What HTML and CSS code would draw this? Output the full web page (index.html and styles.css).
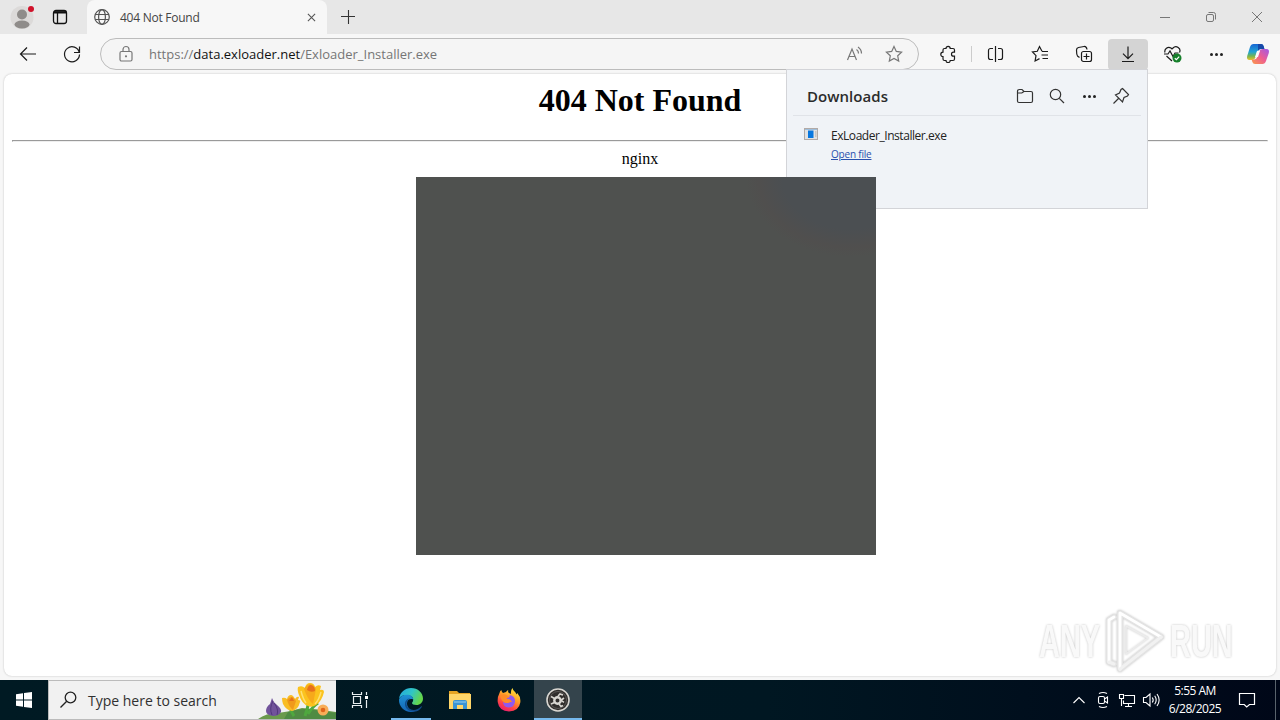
FILE: index.html
```
<!DOCTYPE html>
<html lang="en">
<head>
    <meta charset="utf-8">
    <title>404 Not Found</title>
    <link rel="stylesheet" href="styles.css">
</head>
<body>
<div class="desktop">
    <div class="browser">
        <div class="titlebar">
            <div class="profile">
                <svg width="24" height="24" viewBox="0 0 24 24">
                    <circle cx="12" cy="12.5" r="11.5" fill="#dcdad9"/>
                    <circle cx="12" cy="9.5" r="5" fill="#8f8c8a"/>
                    <ellipse cx="12" cy="19.5" rx="7.5" ry="4" fill="#8f8c8a"/>
                    <circle cx="21" cy="4" r="3" fill="#d0122a"/>
                </svg>
            </div>
            <svg class="workspaces" width="16" height="16" viewBox="0 0 16 16" fill="none" stroke="#111" stroke-width="1.3">
                <rect x="1.5" y="1.5" width="13" height="13" rx="2.5"/>
                <path d="M2 3.3h12" stroke-width="2.4"/>
                <path d="M5.5 4v10"/>
            </svg>
            <div class="tab">
                <svg width="16" height="16" viewBox="0 0 16 16" fill="none" stroke="#555" stroke-width="1.2">
                    <circle cx="8" cy="8" r="7.3"/>
                    <ellipse cx="8" cy="8" rx="3.4" ry="7.3"/>
                    <path d="M1.2 5.5h13.6M1.2 10.5h13.6"/>
                </svg>
                <span class="tab-title">404 Not Found</span>
                <svg width="9" height="9" viewBox="0 0 10 10" fill="none" stroke="#555" stroke-width="1.2"><path d="M1 1l8 8M9 1l-8 8"/></svg>
            </div>
            <svg class="new-tab" width="14" height="14" viewBox="0 0 14 14" fill="none" stroke="#333" stroke-width="1.1"><path d="M7.5 0v14M0 6.5h14"/></svg>
            <div class="window-buttons">
                <svg width="46" height="34" viewBox="0 0 46 34"><path d="M18 17.5h10"/></svg>
                <svg width="46" height="34" viewBox="0 0 46 34"><rect x="18.500" y="14.500" width="7" height="7" rx="1.5"/><path d="M20.500 12.500h5a2 2 0 0 1 2 2v5"/></svg>
                <svg width="46" height="34" viewBox="0 0 46 34"><path d="M18 12l10 10M28 12l-10 10"/></svg>
            </div>
        </div>

        <div class="toolbar">
            <div class="tool"><svg width="20" height="20" viewBox="0 0 20 20"><path d="M18 10H2.500M9 3.500L2.500 10L9 16.500"/></svg></div>
            <div class="tool reload"><svg width="20" height="20" viewBox="0 0 20 20"><path d="M17.300 8.500A7.500 7.500 0 1 0 17.500 10.500M17.500 2.500v6h-5.500"/></svg></div>
            <div class="address">
                <svg class="lock" width="16" height="18" viewBox="0 0 16 18"><rect x="2" y="6.500" width="12" height="9.500" rx="1.5"/><path d="M5 6.500V4.500a3 3 0 0 1 6 0v2"/><circle cx="8" cy="11.300" r=".5"/></svg>
                <span class="url">https://<b>data.exloader.net</b>/Exloader_Installer.exe</span>
                <svg class="read-aloud" width="18" height="18" viewBox="0 0 18 18"><path d="M2.500 15L7 4L11.500 15M4 11.500h6M11.500 4.500a4.500 4.500 0 0 1 2 4M13 2a8 8 0 0 1 3.500 6.500"/></svg>
                <svg class="star" width="18" height="18" viewBox="0 0 18 18"><path d="M9 1.500l2.300 4.900 5.300.7-3.900 3.700 1 5.300L9 13.500l-4.700 2.600 1-5.300L1.400 7.100l5.300-.7z"/></svg>
            </div>
            <div class="tool"><svg width="18" height="18" viewBox="0 0 18 18"><path d="M5.500 3.500H7a2.100 2.100 0 0 1 4.200 0H14q1.500 0 1.500 1.500v2.200h-1a2 2 0 1 0 0 4h1V14q0 1.500-1.500 1.500h-2.800a2.100 2.100 0 0 1-4.200 0H5.500q-1.500 0-1.500-1.500v-2.400a2.200 2.200 0 1 1 0-4.400V5q0-1.500 1.500-1.500z"/></svg></div>
            <div class="divider"></div>
            <div class="tool"><svg width="18" height="18" viewBox="0 0 18 18"><path d="M8.500 1v16M6 3.500H3.500a2 2 0 0 0-2 2v7a2 2 0 0 0 2 2H6M11 3.500h2.500a2 2 0 0 1 2 2v7a2 2 0 0 1-2 2H11"/></svg></div>
            <div class="tool"><svg width="18" height="18" viewBox="0 0 18 18"><path d="M11 6.300L8.500 1.500L6.300 6.300L1.500 7l3.500 3.600-.9 5.400 4.400-2.400M11 6.500h6M10.500 10h6.500M11.500 13.500h5.500"/></svg></div>
            <div class="tool"><svg width="18" height="18" viewBox="0 0 18 18"><rect x="6.500" y="6.500" width="10" height="10" rx="2"/><path d="M11.500 8.500v6M8.500 11.500h6M4.500 12.500L2.500 11Q1.500 9.500 1.500 5Q1.500 3 3.500 2.500L9 1.500Q11.500 1.200 12 4.500"/></svg></div>
            <div class="tool active"><svg width="18" height="18" viewBox="0 0 18 18"><path d="M9 1.500v12M4 8.700l5 5 5-5M3 16.500h12"/></svg></div>
            <div class="tool"><svg width="20" height="18" viewBox="0 0 20 18">
                <path d="M3 7.500A4 4 0 0 1 9 3L10 4 11 3A4 4 0 0 1 17.500 7.500M2 9h4l2-3 3 5.500 2-3.500h3.500M4.500 11l5.500 5"/>
                <circle cx="15" cy="13" r="4.500" fill="#16802b" stroke="none"/>
                <path d="M12.800 13.200l1.600 1.500 2.800-3" stroke="#fff"/>
            </svg></div>
            <div class="tool dots"><i></i><i></i><i></i></div>
            <div class="tool"><svg width="24" height="24" viewBox="0 0 24 24" stroke="none">
                <defs>
                    <linearGradient id="cop1" x1="0" y1="0" x2="0" y2="1"><stop offset="0" stop-color="#1766d4"/><stop offset=".5" stop-color="#21a4d3"/><stop offset=".75" stop-color="#72b453"/><stop offset="1" stop-color="#ebc32b"/></linearGradient>
                    <linearGradient id="cop2" x1="1" y1="0" x2="0" y2="1"><stop offset="0" stop-color="#a059e8"/><stop offset=".5" stop-color="#ee5d91"/><stop offset="1" stop-color="#fa9a48"/></linearGradient>
                </defs>
                <path fill="url(#cop1)" d="M7.500 2H15q2 0 2.600 2L18.400 7H15q-3 0-4 3l-1.500 5q-.8 3-3.500 3H3.500Q.3 18 1.200 14L4 5Q5 2 7.500 2z"/>
                <path fill="#1748a8" d="M12 2h3q2 0 2.600 2L18.400 7H15q-2 0-3 2z"/>
                <path fill="url(#cop2)" d="M16.500 22H9q-2 0-2.600-2L5.600 17.500H8q2.500 0 3.500-3L13 10q1-3 4-3h3.500q3.200 0 2.300 4L20 19q-1 3-3.500 3z"/>
                <path fill="#fafafa" d="M11 9h3l-2 6H9z"/>
            </svg></div>
        </div>

        <div class="viewport">
            <h1>404 Not Found</h1>
            <hr>
            <div class="server">nginx</div>
        </div>
    </div>

    <div class="taskbar">
        <div class="start"><svg width="16" height="16" viewBox="0 0 16 16" fill="#fff"><path d="M0 2.200L7 1.200V7.500H0zM8 1.100L16 0V7.500H8zM0 8.500H7V14.800L0 13.800zM8 8.500h8V16L8 14.900z"/></svg></div>
        <div class="search">
            <svg width="18" height="18" viewBox="0 0 18 18" fill="none" stroke="#222" stroke-width="1.3"><circle cx="10.500" cy="6.500" r="5.300"/><path d="M6.700 10.300L.5 16.500"/></svg>
            <span>Type here to search</span>
            <svg class="flowers" width="80" height="38" viewBox="0 0 80 38">
                <path d="M2 38q8-6 20-6 12-1 24-5 16 1 34 4v7z" fill="#6a9a4c"/>
                <path d="M32 31q14-5 27-2l21 3v6H28z" fill="#4f8b43"/>
                <path d="M53 18q-1 9-4 17M34 26q1 5 4 9M62 22q-5 3-10 11" stroke="#4ea83f" stroke-width="3" fill="none"/>
                <path d="M16 17q1 4 5 7 5 4 4 7-2 4-8 4-7-1-7-5 0-4 4-7z" fill="#71539b"/>
                <path d="M17 20q-4 7-1 14M18 22q5 6 3 12" stroke="#51387d" fill="none"/>
                <path d="M26 17q3-1 5 1 1-4 4-4 2 0 4 4 2-3 4-2l-1 3q3 0 2 2-2 8-8 9-6-1-9-7-1-3-1-6z" fill="#f9bd25"/>
                <path d="M31 19q2-3 5-3 2 1 4 4l-3 9q-4-3-6-10z" fill="#f09a1b"/>
                <path d="M33 20l3-4 2 4z" fill="#e4701d"/>
                <path d="M42 6q4-2 7 1 1-5 5-5 4 0 5 4 3-3 6-1l-1 4q4-1 4 2-2 9-8 13-4 3-8 1-6-2-9-11-2-5-1-8z" fill="#fbc31e"/>
                <path d="M48 8q2-4 6-5 4 1 6 5l-3 15q-5-4-9-15z" fill="#f6a91b"/>
                <path d="M51 9q1-5 4-5 4 1 4 6-4 2-8-1z" fill="#e7701b"/>
                <path d="M45 10q2 8 5 12M65 11q-2 8-6 12" stroke="#ffe071" stroke-width="1.5" fill="none"/>
                <circle cx="67" cy="29" r="5.5" fill="#f8ad58"/><circle cx="67" cy="29" r="2.3" fill="#df651a"/>
            </svg>
        </div>
        <div class="task view"><svg width="18" height="18" viewBox="0 0 18 18" fill="none" stroke="#e8eef0" stroke-width="1.2"><path d="M1.500 1v2.500h9V1M1.500 17v-2.500h9V17M2.500 5.500h7v7h-7zM15.500 1v3M15.500 9v8"/><path d="M14 5h3v3h-3z" fill="#fff" stroke="none"/></svg></div>
        <div class="task open edge"><svg width="26" height="26" viewBox="0 0 26 26">
            <defs>
                <linearGradient id="edge1" x1="0" y1="0" x2="1" y2=".4"><stop offset="0" stop-color="#23a5df"/><stop offset=".55" stop-color="#30c5c7"/><stop offset="1" stop-color="#64d64b"/></linearGradient>
                <linearGradient id="edge2" x1="0" y1="0" x2="0" y2="1"><stop offset="0" stop-color="#1f91d5"/><stop offset="1" stop-color="#1464b3"/></linearGradient>
            </defs>
            <path fill="url(#edge1)" d="M1 12C2 5 7 1 13 1c7 0 12 5 12 10.500 0 4-3 6.500-6.500 6.500-3 0-4.500-1-4.500-2 0-.8 1.200-1.200 1.200-3.300C15.200 9.500 12 8 9 8c-4 0-7 1.500-8 4z"/>
            <path fill="url(#edge2)" d="M1 12.500C2 9.500 5 7.700 9 7.700c3.500 0 6.200 2 6.200 4.700-4-1.200-6.200 1.300-6.200 4.100 0 4.500 4.500 8.300 9 7.200C16.500 24.600 15 25 13 25 6 25 .6 19 1 12.500z"/>
            <path fill="#114b8a" d="M12 11.500c-4 2-4.500 6.500-1.500 9.500 3.500 3 9 2.400 12.500-1.500.8-.7 1.200-.3.800.4-2.500 4-6 5-9.300 4.600C9 23.800 6.500 20 7 16c.4-2.500 2.500-4.500 5-4.500z"/>
        </svg></div>
        <div class="task"><svg width="22" height="20" viewBox="0 0 22 20">
            <path d="M0 1h8l2 2h11v5H0z" fill="#e6a524"/><path d="M0 4h22v15H0z" fill="#ffd669"/>
            <path d="M4 19v-7q0-2 2-2h10q2 0 2 2v7h-4v-4H8v4z" fill="#3a94d4"/><path d="M5 12h12" stroke="#78bde8" stroke-width="1.5"/>
        </svg></div>
        <div class="task"><svg width="24" height="24" viewBox="0 0 24 24">
            <defs>
                <linearGradient id="fox" x1=".8" y1="0" x2=".3" y2="1"><stop offset="0" stop-color="#ffec3d"/><stop offset=".45" stop-color="#ff9a27"/><stop offset=".75" stop-color="#ff4445"/><stop offset="1" stop-color="#e91c70"/></linearGradient>
            </defs>
            <path fill="url(#fox)" d="M2.500 5q.4-2 1.800-3 .4 2 1.700 3l3-1Q10 2.300 11.300 2q-.7 2 .7 3l2 1Q13.500 2 15.500 0q.2 2.500 3 4.500l1 2 .8-1.500Q24 9 23.300 14.500 22 23 12 23.500 2 23 .7 14 .3 9 2.500 5z"/>
            <path fill="#9059ef" d="M12.500 7q6 1 5.500 7-1 5.500-6.500 5.500Q6 19 6 13.500q3 2.500 6 1 2-1 3-.7Q13 11 9.500 11q.2-1.500 2.500-1.700 1-.8.500-2.300z"/>
            <path fill="#ff8c27" d="M3 8q3-3 6.500-1l3 2q-2.300.3-3 2 4-.4 5.500 2.800-2 0-3 .7-3 1.500-6-1Q4 12 3 8z"/>
        </svg></div>
        <div class="task open current"><svg width="24" height="24" viewBox="0 0 24 24" fill="none" stroke="#d8d6d1">
            <circle cx="12" cy="12" r="11" fill="#302e2c" stroke-width="1.6"/>
            <circle cx="12" cy="12" r="8.500" stroke="#5b5856"/>
            <circle cx="11.500" cy="12.500" r="3.200" stroke-width="2.4"/>
            <path d="M5 8.500l3.500 2M5 16l3.500-1.500M12 8l2-2 3 1M13 16l2 2.500 2-1M18 10l-3 2.300 3 2" stroke-width="1.6"/>
        </svg></div>
        <div class="tray">
            <svg width="24" height="24" viewBox="0 0 24 24"><path d="M6.500 15l5.500-5.500L17.500 15"/></svg>
            <svg width="24" height="24" viewBox="0 0 24 24"><rect x="7.500" y="8.500" width="6" height="7" rx="1.5"/><path d="M13.500 11l3-2v6l-3-2M8 5.500q4-2 8 0M8 18.500q4 2 8 0"/></svg>
            <svg width="24" height="24" viewBox="0 0 24 24"><path d="M9.500 7.500h10v8H8.500v-3M10 18.500h7M13.500 16v2.500M4.500 6.500h4v4h-4zM6.500 10.500v7.500"/></svg>
            <svg width="24" height="24" viewBox="0 0 24 24"><path d="M4.500 9.500h2.500L11 6v12l-4-3.500H4.500zM13.300 9.500q1.800 2.500 0 5M15.700 7.700q3 4.300 0 8.600M18 6q4.300 6 0 12"/></svg>
        </div>
        <div class="clock"><span>5:55 AM</span><span>6/28/2025</span></div>
        <svg class="notifications" width="18" height="18" viewBox="0 0 18 18" fill="none" stroke="#fff" stroke-width="1.2"><path d="M1.500 2.500h15v11h-5L8.700 16l-2.500-2.500H1.500z"/></svg>
        <div class="show-desktop"></div>
    </div>

    <div class="downloads">
        <div class="downloads-head">
            <strong>Downloads</strong>
            <svg width="18" height="18" viewBox="0 0 18 18"><path d="M1.500 4.500Q1.500 2.500 3.500 2.500H6L8 4.500h7q1.500 0 1.500 1.500v8q0 1.500-1.500 1.500H3q-1.500 0-1.500-1.500zM1.500 6h4.300L8 4.500"/></svg>
            <svg width="18" height="18" viewBox="0 0 18 18"><circle cx="7.500" cy="7.500" r="5.200"/><path d="M11.300 11.300L16 16"/></svg>
            <div class="dots"><i></i><i></i><i></i></div>
            <svg width="18" height="18" viewBox="0 0 18 18"><path d="M10.500 1.500l6 6-1 1.500-3.500 1.500-1.500 4.500L3.500 8l4-2L9 2.500zM6.500 11.500L1.500 16.500"/></svg>
        </div>
        <div class="download">
            <svg width="14" height="12" viewBox="0 0 14 12"><rect x=".5" y=".5" width="13" height="11" fill="#e2e2e2" stroke="#b2aaa6"/><path d="M1 1.500h12" stroke="#9ebedc"/><path d="M4 2.500h5.500v7.500H4z" fill="#0877df"/><path d="M11 4h1.500M11 6h1.500M11 8h1.500" stroke="#aaa"/></svg>
            <div class="download-text">
                <span>ExLoader_Installer.exe</span>
                <a>Open file</a>
            </div>
        </div>
    </div>

    <div class="splash"></div>

    <div class="watermark">
        <span>ANY</span>
        <svg width="62" height="66" viewBox="0 0 62 66" fill="none" stroke-linejoin="round" stroke-linecap="round">
            <path d="M15 5L56 29L15 61zM9 9L4 12V54L9 56" stroke="#e3e3e3" stroke-width="6"/>
            <path d="M15 61V5L56 29M9 9L4 12V54" stroke="#fff" stroke-width="3"/>
            <path d="M56 29L15 61M4 54L9 56" stroke="#f1f1f1" stroke-width="3"/>
            <path d="M21 18v28l22-16z" stroke="#ececec" stroke-width="1.5"/>
        </svg>
        <span>RUN</span>
    </div>
</div>
</body>
</html>
```
FILE: styles.css
```
* {
    box-sizing: border-box;
}

body {
    margin: 0;
    font-family: "Open Sans", "Noto Sans", sans-serif;
}

svg {
    display: block;
    flex: none;
}

.desktop {
    position: relative;
    width: 1280px;
    height: 720px;
    overflow: hidden;
}

.browser {
    display: flex;
    flex-direction: column;
    height: 680px;
    padding-bottom: 4px;
    background: #f7f7f7;
}

/* tab strip */
.titlebar {
    display: flex;
    align-items: center;
    height: 34px;
    background: #e7e7e7;
}

.profile {
    margin-left: 10px;
}

.workspaces {
    margin: 0 19px 0 18px;
}

.tab {
    display: flex;
    align-items: center;
    align-self: stretch;
    width: 240px;
    padding: 0 11px 0 7px;
    border-radius: 8px 8px 0 0;
    background: #f7f7f7;
    font-size: 12px;
    color: #444;
}

.tab-title {
    flex: 1;
    margin-left: 10px;
    letter-spacing: -0.25px;
}

.new-tab {
    margin-left: 14px;
}

.window-buttons {
    display: flex;
    margin-left: auto;
    fill: none;
    stroke: #777;
}

/* toolbar */
.toolbar {
    display: flex;
    align-items: center;
    height: 40px;
    padding: 0 2px 0 8px;
    fill: none;
    stroke: #1b1b1b;
    stroke-width: 1.2;
}

.tool {
    display: flex;
    align-items: center;
    justify-content: center;
    width: 40px;
    height: 31px;
    margin-right: 4px;
    border-radius: 4px;
}

.tool:last-child {
    margin: 0 0 0 -2px;
}

.reload {
    margin-right: 8px;
}

.active {
    background: #d4d4d4;
}

.address {
    display: flex;
    align-items: center;
    width: 819px;
    height: 32px;
    margin-right: 9px;
    padding: 0 15px 0 17px;
    border: 1px solid #bcbcbc;
    border-radius: 16px;
    background: #f5f5f5;
    font-size: 13px;
    color: #757575;
    stroke: #777;
}

.url {
    flex: 1;
    margin-left: 15px;
}

.url b {
    font-weight: normal;
    color: #111;
}

.star {
    margin-left: 22px;
}

.divider {
    width: 1px;
    height: 16px;
    margin: 0 4px 0 -1px;
    background: #ccc;
}

.dots {
    display: flex;
    align-items: center;
    justify-content: center;
    gap: 2px;
}

.dots i {
    width: 3px;
    height: 3px;
    border-radius: 50%;
    background: #222;
}

/* page */
.viewport {
    flex: 1;
    margin: 0 4px;
    padding: 8px;
    border-radius: 8px;
    background: #fff;
    box-shadow: 0 0 2px #bbb;
    font-family: "Liberation Serif", serif;
    font-size: 16px;
    text-align: center;
    color: #000;
}

.viewport h1 {
    margin: 0 0 21px;
    font-size: 32px;
    line-height: 37px;
}

.viewport hr {
    margin: 0 0 8px;
}

/* downloads flyout */
.downloads {
    position: absolute;
    top: 69px;
    left: 786px;
    width: 362px;
    height: 140px;
    padding: 0 6px;
    border: 1px solid #d3d4d8;
    background: #f0f3f7;
}

.downloads-head {
    display: flex;
    align-items: center;
    gap: 14px;
    height: 46px;
    padding: 7px 11px 0 14px;
    border-bottom: 1px solid #e0e3e8;
    fill: none;
    stroke: #333;
    stroke-width: 1.2;
}

.downloads-head strong {
    flex: 1;
    font-size: 15px;
    font-weight: 600;
    letter-spacing: 0.05px;
    color: #2b2b2b;
}

.downloads-head .dots {
    width: 18px;
}

.download {
    display: flex;
    padding: 12px 11px;
    font-size: 12px;
    color: #222;
}

.download-text {
    display: flex;
    flex-direction: column;
    gap: 3px;
    margin-left: 13px;
    line-height: 16px;
    letter-spacing: -0.45px;
}

.download-text a {
    font-size: 10px;
    line-height: 14px;
    letter-spacing: -0.2px;
    text-decoration: underline;
    color: #2950ad;
}

.splash {
    position: absolute;
    top: 177px;
    left: 416px;
    width: 460px;
    height: 378px;
    background: radial-gradient(ellipse 104px 80px at 434px 0, #4b4f52 0 65%, #504f4e 88%, transparent), #4f514f;
}

.watermark {
    position: absolute;
    top: 608px;
    left: 1039px;
    display: flex;
    align-items: center;
    gap: 3px;
    font-family: "Liberation Sans", sans-serif;
    font-size: 46px;
    font-weight: bold;
    color: #f9f9f9;
    filter: drop-shadow(0 0 1px #c4c4c4);
}

.watermark span {
    width: 63px;
    transform: scaleX(0.63);
    transform-origin: left;
}

/* taskbar */
.taskbar {
    display: flex;
    align-items: center;
    height: 40px;
    background: linear-gradient(90deg, #001a23, #001722 60%, #000718);
}

.start {
    display: flex;
    justify-content: center;
    width: 48px;
}

.search {
    display: flex;
    align-items: center;
    width: 288px;
    height: 40px;
    padding-left: 11px;
    border: 1px solid #bbb;
    border-right: none;
    background: #f1f1f1;
    font-size: 14px;
    color: #303030;
}

.search span {
    flex: 1;
    margin-left: 10px;
    white-space: nowrap;
}

.task {
    display: flex;
    align-items: center;
    justify-content: center;
    width: 48px;
    height: 40px;
    margin-right: 1px;
}

.view {
    margin-right: 3px;
}

.open {
    background: linear-gradient(#76b9ed, #76b9ed) bottom / 40px 2px no-repeat;
}

.current {
    background: linear-gradient(#76b9ed, #76b9ed) bottom / 48px 2px no-repeat #34444c;
}

.tray {
    display: flex;
    margin-left: auto;
    fill: none;
    stroke: #fff;
    stroke-width: 1.1;
}

.clock {
    display: flex;
    flex-direction: column;
    align-items: center;
    width: 64px;
    font-size: 12px;
    line-height: 18px;
    letter-spacing: -0.5px;
    color: #fff;
}

.notifications {
    margin: 0 19px 0 11px;
}

.show-desktop {
    width: 5px;
    height: 40px;
    border-left: 1px solid #59636c;
}
```
